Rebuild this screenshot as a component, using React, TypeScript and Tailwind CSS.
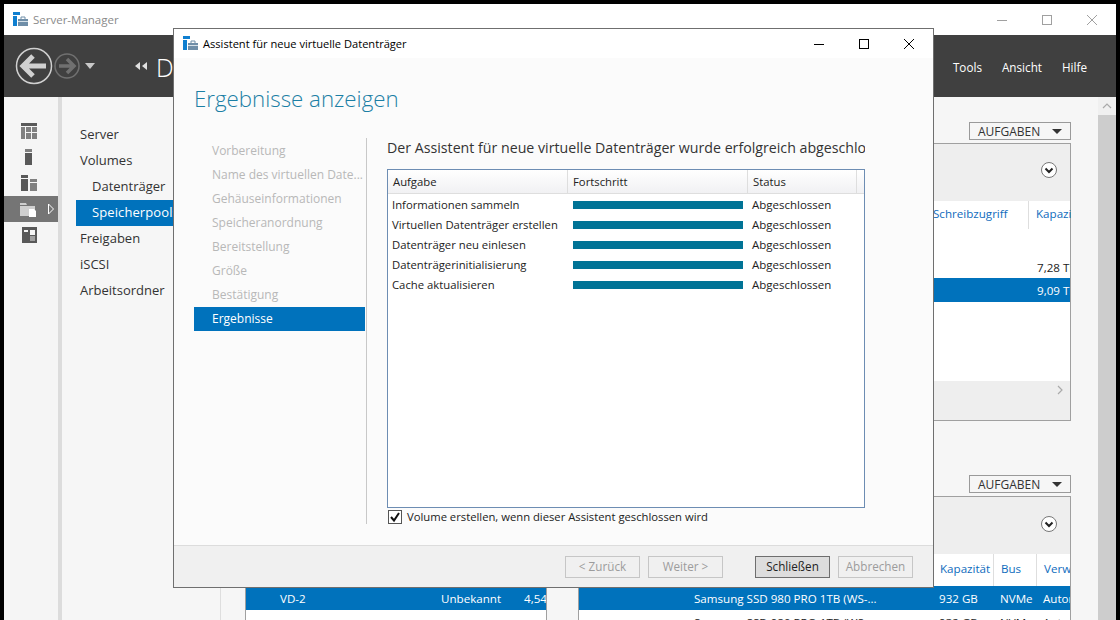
const FONT = "font-['Open_Sans','Noto_Sans',sans-serif]"

const NAV = [
  { label: "Server", cls: "pl-[4px] text-[#333]" },
  { label: "Volumes", cls: "pl-[4px] text-[#333]" },
  { label: "Datenträger", cls: "pl-[16px] text-[#333]" },
  { label: "Speicherpools", cls: "pl-[16px] bg-[#0072bc] text-white tracking-[0.1px]" },
  { label: "Freigaben", cls: "pl-[4px] text-[#333]" },
  { label: "iSCSI", cls: "pl-[4px] text-[#333]" },
  { label: "Arbeitsordner", cls: "pl-[4px] text-[#333]" },
]

const STEPS = [
  "Vorbereitung",
  "Name des virtuellen Date...",
  "Gehäuseinformationen",
  "Speicheranordnung",
  "Bereitstellung",
  "Größe",
  "Bestätigung",
]

const TASKS = [
  "Informationen sammeln",
  "Virtuellen Datenträger erstellen",
  "Datenträger neu einlesen",
  "Datenträgerinitialisierung",
  "Cache aktualisieren",
]

function AppIcon() {
  return (
    <svg width="16" height="16" viewBox="0 0 16 16" className="shrink-0">
      <rect x="0" y="0" width="7" height="3" fill="#0f7fd0" />
      <rect x="0" y="4" width="4" height="10" fill="#0f7fd0" />
      <rect x="5" y="7" width="10" height="7" fill="#6f8ea8" />
      <rect x="5" y="9" width="10" height="1" fill="#d5e0e8" />
      <path d="M8 7V5h4v2" fill="none" stroke="#6f8ea8" strokeWidth="1" />
    </svg>
  )
}

function RailIcons() {
  return (
    <div className="flex w-[54px] shrink-0 flex-col bg-[#f5f5f5] pt-[21px]">
      <div className="flex h-[26px] items-center justify-center pr-[4px]">
        <svg width="16" height="16" viewBox="0 0 16 16">
          <rect x="0" y="0" width="16" height="3" fill="#595959" />
          <rect x="0" y="4" width="4" height="12" fill="#808080" />
          <rect x="5" y="4" width="5" height="5" fill="#808080" />
          <rect x="11" y="4" width="5" height="5" fill="#808080" />
          <rect x="5" y="10" width="5" height="6" fill="#808080" />
          <rect x="11" y="10" width="5" height="6" fill="#808080" />
        </svg>
      </div>
      <div className="flex h-[26px] items-center justify-center pr-[4px]">
        <svg width="8" height="16" viewBox="0 0 8 16">
          <rect x="0" y="0" width="7" height="3" fill="#808080" />
          <rect x="0" y="4" width="7" height="12" fill="#595959" />
        </svg>
      </div>
      <div className="flex h-[26px] items-center justify-center pr-[4px]">
        <svg width="16" height="16" viewBox="0 0 16 16">
          <rect x="0" y="0" width="7" height="3" fill="#595959" />
          <rect x="0" y="4" width="7" height="12" fill="#595959" />
          <rect x="9" y="4" width="7" height="3" fill="#808080" />
          <rect x="9" y="8" width="7" height="8" fill="#808080" />
        </svg>
      </div>
      <div className="relative flex h-[26px] items-center bg-[#757575] pl-[16px]">
        <svg width="17" height="16" viewBox="0 0 17 16">
          <path d="M0 2h6l1 2h8v11H0z" fill="#cfcfcf" />
          <rect x="0" y="4" width="15" height="1" fill="#757575" />
          <path d="M9 8h5l2 2v6H9z" fill="#fff" />
        </svg>
        <svg width="8" height="12" viewBox="0 0 8 12" className="ml-[10px]">
          <path d="M1.5 1l5 5-5 5z" fill="none" stroke="#fff" strokeWidth="1" />
        </svg>
      </div>
      <div className="flex h-[26px] items-center justify-center pr-[4px]">
        <svg width="15" height="16" viewBox="0 0 15 16">
          <rect x="0" y="0" width="15" height="16" fill="#595959" />
          <rect x="2" y="3" width="4" height="2" fill="#f5f5f5" />
          <rect x="8" y="3" width="5" height="5" fill="#f5f5f5" />
          <rect x="8" y="9" width="5" height="5" fill="#a0a0a0" />
        </svg>
      </div>
    </div>
  )
}

function BackForward() {
  return (
    <div className="flex items-center pl-[11px]">
      <svg width="38" height="38" viewBox="0 0 38 38">
        <circle cx="19" cy="19" r="17.5" fill="none" stroke="#d0d0d0" strokeWidth="1.5" />
        <path d="M8 19h23M18 9L8 19l10 10" fill="none" stroke="#d0d0d0" strokeWidth="5" />
      </svg>
      <svg width="26" height="26" viewBox="0 0 26 26" className="ml-[1px]">
        <circle cx="13" cy="13" r="12" fill="none" stroke="#707070" strokeWidth="1.5" />
        <path d="M5 13h15M13 6l7 7-7 7" fill="none" stroke="#707070" strokeWidth="3.5" />
      </svg>
      <svg width="10" height="6" viewBox="0 0 10 6" className="ml-[5px]">
        <path d="M0 0h10L5 6z" fill="#c8c8c8" />
      </svg>
      <svg width="12" height="8" viewBox="0 0 12 8" className="ml-[40px]">
        <path d="M5 0v8L0 4zM12 0v8L7 4z" fill="#e0e0e0" />
      </svg>
      <span className="mt-[3px] ml-[9px] text-[25px] leading-none font-light text-white">D</span>
    </div>
  )
}

function TasksButton() {
  return (
    <div className="flex h-[18px] w-[102px] shrink-0 items-center justify-between border border-[#9a9a9a] px-[8px] text-[12px] leading-none text-[#333]">
      <span className="pt-[1px]">AUFGABEN</span>
      <svg width="10" height="5" viewBox="0 0 10 5">
        <path d="M0 0h10L5 5z" fill="#333" />
      </svg>
    </div>
  )
}

function Chevron() {
  return (
    <svg width="16" height="16" viewBox="0 0 16 16">
      <circle cx="8" cy="8" r="7.5" fill="#fff" stroke="#777" />
      <path d="M4.5 6.5L8 10l3.5-3.5" fill="none" stroke="#222" strokeWidth="2" />
    </svg>
  )
}

function Background() {
  return (
    <div className="flex min-w-0 flex-1 flex-col items-end overflow-hidden bg-[#f6f6f6] pt-[25px] pr-[27px] text-[11.6px] leading-none">
      <TasksButton />
      <div className="mt-[3px] flex h-[278px] w-[826px] shrink-0 flex-col border border-[#a0a0a0] bg-white">
        <div className="flex h-[57px] shrink-0 items-center justify-end bg-[#eeeeee] pr-[13px] pb-[5px]">
          <Chevron />
        </div>
        <div className="flex h-[28px] shrink-0 items-center whitespace-nowrap text-[#0f6cbd]">
          <span className="ml-[687px] flex h-full w-[96px] shrink-0 items-center border-r border-[#dedede] pb-[3px]">Schreibzugriff</span>
          <span className="ml-[7px] w-[35px] shrink-0 overflow-hidden pb-[3px]">Kapazität</span>
        </div>
        <div className="mt-[25px] flex h-[24px] shrink-0 items-center overflow-hidden pt-[3px] pl-[791px] whitespace-nowrap text-[#222]">
          <span>7,28 TB</span>
        </div>
        <div className="flex h-[24px] shrink-0 items-center overflow-hidden bg-[#0072bc] pt-[1px] pl-[791px] whitespace-nowrap text-white">
          <span>9,09 TB</span>
        </div>
        <div className="flex-1" />
        <div className="flex h-[39px] shrink-0 justify-end bg-[#eeeeee] pt-[4px] pr-[6px]">
          <svg width="8" height="10" viewBox="0 0 8 10">
            <path d="M2 1l4 4-4 4" fill="none" stroke="#aaa" strokeWidth="1.2" />
          </svg>
        </div>
      </div>
      <div className="mt-[54px] shrink-0">
        <TasksButton />
      </div>
      <div className="mt-[3px] flex h-[140px] w-[851px] shrink-0 items-stretch">
        <div className="w-[25px] shrink-0 border-l border-[#dedede]" />
        <div className="flex w-[302px] shrink-0 flex-col border-x border-t border-[#a0a0a0] bg-white">
          <div className="h-[57px] shrink-0 bg-[#eeeeee]" />
          <div className="h-[32px] shrink-0" />
          <div className="flex h-[24px] shrink-0 items-center overflow-hidden bg-[#0072bc] pt-[1px] whitespace-nowrap text-white">
            <span className="ml-[34px] w-[161px] shrink-0">VD-2</span>
            <span className="w-[83px] shrink-0">Unbekannt</span>
            <span>4,54 TB</span>
          </div>
        </div>
        <div className="w-[31px] shrink-0" />
        <div className="flex w-[493px] shrink-0 flex-col border-x border-t border-[#a0a0a0] bg-white">
          <div className="flex h-[57px] shrink-0 items-center justify-end bg-[#eeeeee] pr-[13px] pb-[4px]">
            <Chevron />
          </div>
          <div className="flex h-[32px] shrink-0 items-center overflow-hidden whitespace-nowrap text-[#0f6cbd]">
            <span className="ml-[361px] flex h-full w-[54px] shrink-0 items-center border-r border-[#dedede] pb-[3px]">Kapazität</span>
            <span className="ml-[7px] flex h-full w-[36px] shrink-0 items-center border-r border-[#dedede] pb-[3px]">Bus</span>
            <span className="ml-[7px] pb-[3px]">Verwendung</span>
          </div>
          <div className="flex h-[24px] shrink-0 items-center overflow-hidden bg-[#0072bc] pt-[1px] whitespace-nowrap text-white">
            <span className="ml-[115px] w-[245px] shrink-0">Samsung SSD 980 PRO 1TB (WS-...</span>
            <span className="w-[61px] shrink-0">932 GB</span>
            <span className="w-[43px] shrink-0">NVMe</span>
            <span>Automatisch</span>
          </div>
          <div className="flex h-[24px] shrink-0 items-center overflow-hidden pt-[1px] whitespace-nowrap text-[#222]">
            <span className="ml-[115px] w-[245px] shrink-0">Samsung SSD 980 PRO 1TB (WS-...</span>
            <span className="w-[61px] shrink-0">932 GB</span>
            <span className="w-[43px] shrink-0">NVMe</span>
            <span>Automatisch</span>
          </div>
        </div>
      </div>
    </div>
  )
}

function Wizard() {
  return (
    <div className="absolute top-[28px] left-[173px] flex h-[560px] w-[761px] flex-col border border-[#6f6f6f] bg-[#fbfbfb]">
      <div className="flex h-[29px] shrink-0 items-center bg-white pl-[9px]">
        <AppIcon />
        <span className="ml-[4px] pt-[1px] text-[11.1px] text-black">Assistent für neue virtuelle Datenträger</span>
        <div className="ml-auto flex items-center pr-[18px]">
          <svg width="12" height="12" viewBox="0 0 12 12">
            <path d="M1 6.5h10" stroke="#000" strokeWidth="1" />
          </svg>
          <svg width="12" height="12" viewBox="0 0 12 12" className="ml-[33px]">
            <rect x="1.5" y="1.5" width="9" height="9" fill="none" stroke="#000" />
          </svg>
          <svg width="12" height="12" viewBox="0 0 12 12" className="ml-[33px]">
            <path d="M1 1l10 10M11 1L1 11" stroke="#000" strokeWidth="1" />
          </svg>
        </div>
      </div>
      <div className="flex min-h-0 flex-1 flex-col pl-[20px]">
        <div className="mt-[26px] h-[30px] text-[22.3px] leading-[30px] font-light text-[#1b7fa5]">
          Ergebnisse anzeigen
        </div>
        <div className="mt-[24px] flex h-[386px]">
          <div className="flex w-[172px] shrink-0 flex-col pt-[1px] pr-[1px]">
            {STEPS.map((s) => (
              <div key={s} className="flex h-[24px] items-center pl-[18px] text-[12px] whitespace-nowrap text-[#b8b8b8]">
                {s}
              </div>
            ))}
            <div className="flex h-[24px] items-center bg-[#0072bc] pl-[18px] text-[12px] text-white">Ergebnisse</div>
          </div>
          <div className="w-[1px] shrink-0 bg-[#c8c8c8]" />
          <div className="ml-[20px] flex w-[478px] shrink-0 flex-col">
            <div className="h-[20px] overflow-hidden text-[14.2px] leading-[20px] whitespace-nowrap text-[#333]">
              Der Assistent für neue virtuelle Datenträger wurde erfolgreich abgeschlossen.
            </div>
            <div className="mt-[11px] flex h-[340px] flex-col border border-[#6d8db3] bg-white">
              <div className="flex h-[24px] shrink-0 border-b border-[#dedede] bg-gradient-to-b from-white to-[#f1f1f3] text-[11.3px] text-[#222]">
                <div className="flex w-[180px] items-center border-r border-[#dedede] pt-[3px] pl-[5px]">Aufgabe</div>
                <div className="flex w-[180px] items-center border-r border-[#dedede] pt-[3px] pl-[5px]">Fortschritt</div>
                <div className="flex w-[109px] items-center border-r border-[#dedede] pt-[3px] pl-[5px]">Status</div>
              </div>
              <div className="pt-[1px]">
                {TASKS.map((t) => (
                  <div key={t} className="flex h-[20px] items-center text-[11.5px] text-[#222]">
                    <div className="w-[180px] pt-[1px] pl-[4px] text-[11.3px] whitespace-nowrap">{t}</div>
                    <div className="ml-[5px] h-[8px] w-[170px] bg-[#007396]" />
                    <div className="ml-[9px]">Abgeschlossen</div>
                  </div>
                ))}
              </div>
            </div>
            <label className="mt-[1px] ml-[1px] flex h-[15px] items-center">
              <span className="flex h-[14px] w-[14px] items-center justify-center border border-[#555] bg-white">
                <svg width="12" height="12" viewBox="0 0 12 12">
                  <path d="M2 6l3 3.5L10 2" fill="none" stroke="#111" strokeWidth="2" />
                </svg>
              </span>
              <span className="ml-[5px] pt-[1px] text-[11.25px] text-[#222]">Volume erstellen, wenn dieser Assistent geschlossen wird</span>
            </label>
          </div>
        </div>
      </div>
      <div className="flex h-[42px] shrink-0 items-center justify-end gap-[8px] border-t border-[#dcdcdc] bg-[#f0f0f0] pr-[20px] text-[11.7px]">
        <div className="flex h-[22px] w-[75px] items-center justify-center border border-[#c6c6c6] text-[#9c9c9c]">&lt; Zurück</div>
        <div className="flex h-[22px] w-[75px] items-center justify-center border border-[#c6c6c6] text-[#9c9c9c]">Weiter &gt;</div>
        <div className="ml-[24px] flex h-[22px] w-[75px] items-center justify-center border border-[#6e6e6e] bg-[#dddddd] text-[#222]">Schließen</div>
        <div className="flex h-[22px] w-[75px] items-center justify-center border border-[#c6c6c6] text-[#9c9c9c]">Abbrechen</div>
      </div>
    </div>
  )
}

export default function App() {
  return (
    <div className={`relative h-[620px] w-[1120px] overflow-hidden bg-black p-[4px] pb-0 ${FONT}`}>
      <div className="flex h-full w-[1112px] flex-col bg-white">
        <div className="flex h-[31px] shrink-0 items-center pl-[9px]">
          <AppIcon />
          <span className="ml-[4px] text-[11.5px] text-[#8a8a8a]">Server-Manager</span>
          <div className="ml-auto flex items-center pr-[18px]">
            <svg width="12" height="12" viewBox="0 0 12 12">
              <path d="M1 6.5h10" stroke="#a0a0a0" />
            </svg>
            <svg width="12" height="12" viewBox="0 0 12 12" className="ml-[33px]">
              <rect x="1.5" y="1.5" width="9" height="9" fill="none" stroke="#a0a0a0" />
            </svg>
            <svg width="12" height="12" viewBox="0 0 12 12" className="ml-[33px]">
              <path d="M1 1l10 10M11 1L1 11" stroke="#a0a0a0" />
            </svg>
          </div>
        </div>
        <div className="flex h-[62px] shrink-0 items-center justify-between bg-[#404040]">
          <BackForward />
          <div className="flex gap-[20px] pt-[3px] pr-[29px] text-[11.7px] text-white">
            <span>Tools</span>
            <span>Ansicht</span>
            <span>Hilfe</span>
          </div>
        </div>
        <div className="flex min-h-0 flex-1">
          <RailIcons />
          <div className="w-[4px] shrink-0 bg-[#dcdcdc]" />
          <div className="flex w-[112px] shrink-0 flex-col overflow-hidden bg-[#f6f6f6] pt-[25px] pl-[14px] text-[13px]">
            {NAV.map((n) => (
              <div key={n.label} className={`flex h-[26px] shrink-0 items-center whitespace-nowrap ${n.cls}`}>
                {n.label}
              </div>
            ))}
          </div>
          <Background />
          <div className="flex w-[18px] shrink-0 flex-col bg-[#cdcdcd]">
            <div className="flex h-[18px] items-center justify-center bg-[#f0f0f0]">
              <svg width="10" height="6" viewBox="0 0 10 6">
                <path d="M1 5l4-4 4 4" fill="none" stroke="#aaa" strokeWidth="1.2" />
              </svg>
            </div>
          </div>
        </div>
      </div>
      <Wizard />
    </div>
  )
}
